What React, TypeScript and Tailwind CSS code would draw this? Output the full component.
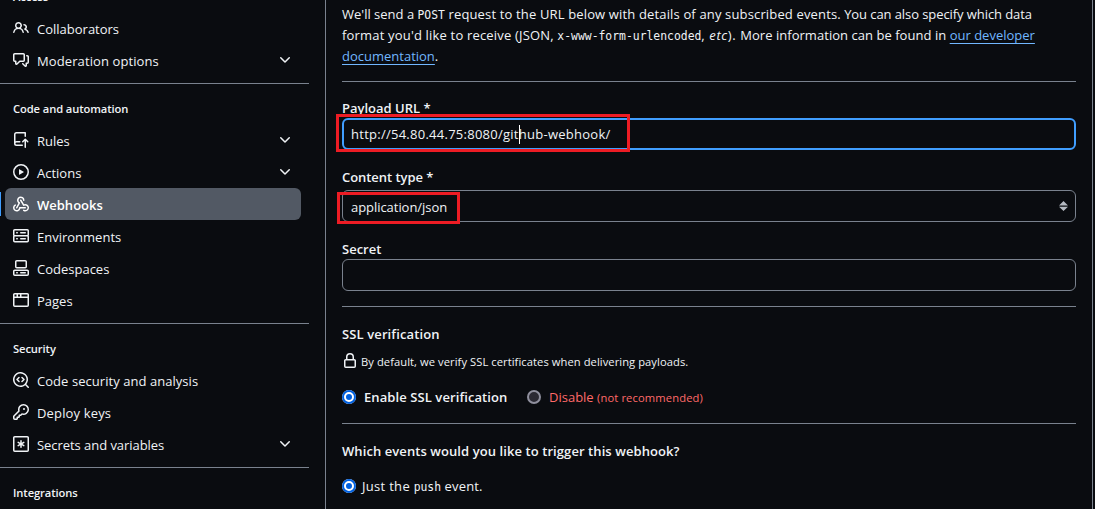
import React from "react";

const icons = {
  people:
    "M2 5.5a3.5 3.5 0 1 1 5.898 2.549 5.508 5.508 0 0 1 3.034 4.084.75.75 0 1 1-1.482.235 4 4 0 0 0-7.9 0 .75.75 0 0 1-1.482-.236A5.507 5.507 0 0 1 3.102 8.05 3.493 3.493 0 0 1 2 5.5ZM11 4a3.001 3.001 0 0 1 2.22 5.018 5.01 5.01 0 0 1 2.56 3.012.749.749 0 0 1-.885.954.752.752 0 0 1-.549-.514 3.507 3.507 0 0 0-2.522-2.372.75.75 0 0 1-.574-.73v-.352a.75.75 0 0 1 .416-.672A1.5 1.5 0 0 0 11 5.5.75.75 0 0 1 11 4Zm-5.5-.5a2 2 0 1 0-.001 3.999A2 2 0 0 0 5.5 3.5Z",
  discussion:
    "M1.75 1h8.5c.966 0 1.75.784 1.75 1.75v5.5A1.75 1.75 0 0 1 10.25 10H7.061l-2.574 2.573A1.458 1.458 0 0 1 2 11.543V10h-.25A1.75 1.75 0 0 1 0 8.25v-5.5C0 1.784.784 1 1.75 1ZM1.5 2.75v5.5c0 .138.112.25.25.25h1a.75.75 0 0 1 .75.75v2.19l2.72-2.72a.749.749 0 0 1 .53-.22h3.5a.25.25 0 0 0 .25-.25v-5.5a.25.25 0 0 0-.25-.25h-8.5a.25.25 0 0 0-.25.25Zm13 2a.25.25 0 0 0-.25-.25h-.5a.75.75 0 0 1 0-1.5h.5c.966 0 1.75.784 1.75 1.75v5.5A1.75 1.75 0 0 1 14.25 12H14v1.543a1.458 1.458 0 0 1-2.487 1.03L9.22 12.28a.749.749 0 0 1 .326-1.275.749.749 0 0 1 .734.215l2.22 2.22v-2.19a.75.75 0 0 1 .75-.75h1a.25.25 0 0 0 .25-.25Z",
  repoPush:
    "M1 2.5A2.5 2.5 0 0 1 3.5 0h8.75a.75.75 0 0 1 .75.75v3.5a.75.75 0 0 1-1.5 0V1.5h-8a1 1 0 0 0-1 1v6.708A2.493 2.493 0 0 1 3.5 9h3.25a.75.75 0 0 1 0 1.5H3.5a1 1 0 0 0 0 2h5.75a.75.75 0 0 1 0 1.5H3.5A2.5 2.5 0 0 1 1 11.5Zm13.23 7.79h-.001l-1.224-1.224v6.184a.75.75 0 0 1-1.5 0V9.066L10.28 10.29a.75.75 0 0 1-1.06-1.061l2.505-2.504a.75.75 0 0 1 1.06 0L15.29 9.23a.751.751 0 0 1-.018 1.042.751.751 0 0 1-1.042.018Z",
  play: "M8 0a8 8 0 1 1 0 16A8 8 0 0 1 8 0ZM1.5 8a6.5 6.5 0 1 0 13 0 6.5 6.5 0 0 0-13 0Zm4.879-2.773 4.264 2.559a.25.25 0 0 1 0 .428l-4.264 2.559A.25.25 0 0 1 6 10.559V5.442a.25.25 0 0 1 .379-.215Z",
  webhook:
    "M5.5 4.25a2.25 2.25 0 0 1 4.5 0 .75.75 0 0 0 1.5 0 3.75 3.75 0 1 0-6.14 2.889l-2.272 4.258a.75.75 0 0 0 1.324.706L7 7.25a.75.75 0 0 0-.309-1.015A2.25 2.25 0 0 1 5.5 4.25ZM7.364 3.607a.75.75 0 0 1 1.03.257l2.608 4.349a3.75 3.75 0 1 1-.628 6.785.75.75 0 0 1 .752-1.299 2.25 2.25 0 1 0-.033-3.88.75.75 0 0 1-1.03-.256L7.107 4.636a.75.75 0 0 1 .257-1.03ZM2.9 8.776A.75.75 0 0 1 2.625 9.8 2.25 2.25 0 1 0 6 11.75a.75.75 0 0 1 .75-.751h5.5a.75.75 0 0 1 0 1.5H7.425a3.751 3.751 0 1 1-5.55-3.998.75.75 0 0 1 1.024.274Z",
  server:
    "M1.75 1h12.5c.966 0 1.75.784 1.75 1.75v4c0 .372-.116.717-.314 1 .198.283.314.628.314 1v4a1.75 1.75 0 0 1-1.75 1.75H1.75A1.75 1.75 0 0 1 0 12.75v-4c0-.358.109-.707.314-1a1.739 1.739 0 0 1-.314-1v-4C0 1.784.784 1 1.75 1ZM1.5 2.75v4c0 .138.112.25.25.25h12.5a.25.25 0 0 0 .25-.25v-4a.25.25 0 0 0-.25-.25H1.75a.25.25 0 0 0-.25.25Zm.25 5.75a.25.25 0 0 0-.25.25v4c0 .138.112.25.25.25h12.5a.25.25 0 0 0 .25-.25v-4a.25.25 0 0 0-.25-.25ZM7 4.75A.75.75 0 0 1 7.75 4h4.5a.75.75 0 0 1 0 1.5h-4.5A.75.75 0 0 1 7 4.75ZM7.75 10h4.5a.75.75 0 0 1 0 1.5h-4.5a.75.75 0 0 1 0-1.5ZM3 4.75A.75.75 0 0 1 3.75 4h.5a.75.75 0 0 1 0 1.5h-.5A.75.75 0 0 1 3 4.75ZM3.75 10h.5a.75.75 0 0 1 0 1.5h-.5a.75.75 0 0 1 0-1.5Z",
  codespaces:
    "M0 11.25c0-.966.784-1.75 1.75-1.75h12.5c.966 0 1.75.784 1.75 1.75v3A1.75 1.75 0 0 1 14.25 16H1.75A1.75 1.75 0 0 1 0 14.25Zm2-9.5C2 .784 2.784 0 3.75 0h8.5C13.216 0 14 .784 14 1.75v5a1.75 1.75 0 0 1-1.75 1.75h-8.5A1.75 1.75 0 0 1 2 6.75Zm1.75-.25a.25.25 0 0 0-.25.25v5c0 .138.112.25.25.25h8.5a.25.25 0 0 0 .25-.25v-5a.25.25 0 0 0-.25-.25Zm-2 9.5a.25.25 0 0 0-.25.25v3c0 .138.112.25.25.25h12.5a.25.25 0 0 0 .25-.25v-3a.25.25 0 0 0-.25-.25ZM7 12.75a.75.75 0 0 1 .75-.75h4.5a.75.75 0 0 1 0 1.5h-4.5a.75.75 0 0 1-.75-.75Zm-4 0a.75.75 0 0 1 .75-.75h.5a.75.75 0 0 1 0 1.5h-.5a.75.75 0 0 1-.75-.75Z",
  browser:
    "M0 2.75C0 1.784.784 1 1.75 1h12.5c.966 0 1.75.784 1.75 1.75v10.5A1.75 1.75 0 0 1 14.25 15H1.75A1.75 1.75 0 0 1 0 13.25ZM14.5 6h-13v7.25c0 .138.112.25.25.25h12.5a.25.25 0 0 0 .25-.25Zm-6-3.5v2h6V2.75a.25.25 0 0 0-.25-.25ZM5 2.5v2h2v-2Zm-3.25 0a.25.25 0 0 0-.25.25V4.5h2v-2Z",
  codescan:
    "M8.47 4.97a.75.75 0 0 0 0 1.06L9.94 7.5 8.47 8.97a.75.75 0 1 0 1.06 1.06l2-2a.75.75 0 0 0 0-1.06l-2-2a.75.75 0 0 0-1.06 0ZM6.53 6.03a.75.75 0 0 0-1.06-1.06l-2 2a.75.75 0 0 0 0 1.06l2 2a.75.75 0 1 0 1.06-1.06L5.06 7.5l1.47-1.47ZM12.246 13.307a7.501 7.501 0 1 1 1.06-1.06l2.474 2.473a.749.749 0 0 1-.326 1.275.749.749 0 0 1-.734-.215ZM1.5 7.5a6.002 6.002 0 0 0 3.608 5.504 6.002 6.002 0 0 0 6.486-1.117.748.748 0 0 1 .292-.293A6 6 0 1 0 1.5 7.5Z",
  key: "M10.5 0a5.499 5.499 0 1 1-1.288 10.848l-.932.932a.749.749 0 0 1-.53.22H7v.75a.749.749 0 0 1-.22.53l-.5.5a.749.749 0 0 1-.53.22H5v.75a.749.749 0 0 1-.22.53l-.5.5a.749.749 0 0 1-.53.22h-2A1.75 1.75 0 0 1 0 14.25v-2c0-.199.079-.389.22-.53l4.932-4.932A5.5 5.5 0 0 1 10.5 0Zm-4 5.5c-.001.431.069.86.205 1.269a.75.75 0 0 1-.181.768L1.5 12.56v1.69c0 .138.112.25.25.25h1.69l.06-.06v-1.19a.75.75 0 0 1 .75-.75h1.19l.06-.06v-1.19a.75.75 0 0 1 .75-.75h1.19l1.023-1.025a.75.75 0 0 1 .768-.18A4 4 0 1 0 6.5 5.5ZM11 6a1 1 0 1 1 0-2 1 1 0 0 1 0 2Z",
  asterisk:
    "M1.75 0h12.5C15.216 0 16 .784 16 1.75v12.5A1.75 1.75 0 0 1 14.25 16H1.75A1.75 1.75 0 0 1 0 14.25V1.75C0 .784.784 0 1.75 0ZM1.5 1.75v12.5c0 .138.112.25.25.25h12.5a.25.25 0 0 0 .25-.25V1.75a.25.25 0 0 0-.25-.25H1.75a.25.25 0 0 0-.25.25ZM8 4a.75.75 0 0 1 .75.75V6.7l1.69-.975a.75.75 0 0 1 .75 1.3L9.5 8l1.69.976a.75.75 0 0 1-.75 1.298L8.75 9.3v1.951a.75.75 0 0 1-1.5 0V9.299l-1.69.976a.75.75 0 0 1-.75-1.3L6.5 8l-1.69-.975a.75.75 0 0 1 .75-1.3l1.69.976V4.75A.75.75 0 0 1 8 4Z",
  lock: "M4 4a4 4 0 0 1 8 0v2h.25c.966 0 1.75.784 1.75 1.75v5.5A1.75 1.75 0 0 1 12.25 15h-8.5A1.75 1.75 0 0 1 2 13.25v-5.5C2 6.784 2.784 6 3.75 6H4Zm8.25 3.5h-8.5a.25.25 0 0 0-.25.25v5.5c0 .138.112.25.25.25h8.5a.25.25 0 0 0 .25-.25v-5.5a.25.25 0 0 0-.25-.25ZM10.5 6V4a2.5 2.5 0 1 0-5 0v2Z",
  chevron:
    "M12.78 5.22a.749.749 0 0 1 0 1.06l-4.25 4.25a.749.749 0 0 1-1.06 0L3.22 6.28a.749.749 0 1 1 1.06-1.06L8 8.939l3.72-3.719a.749.749 0 0 1 1.06 0Z",
};

type IconName = keyof typeof icons;

function Icon({ name }: { name: IconName }) {
  return (
    <svg viewBox="0 0 16 16" className="size-4 shrink-0 fill-current" aria-hidden="true">
      {name === "webhook" ? (
        icons.webhook.split("Z").filter(Boolean).map((d) => <path key={d} d={d + "Z"} />)
      ) : (
        <path d={icons[name]} />
      )}
    </svg>
  );
}

interface Item {
  icon: IconName;
  label: string;
  spacing?: string;
  expandable?: boolean;
  active?: boolean;
}

function NavItem({ icon, label, spacing = "", expandable, active }: Item) {
  return (
    <li className="flex h-8 items-center">
      <span className={`h-6 w-[5px] shrink-0 ${active ? "border-l border-[#409eff]" : ""}`} />
      <a
        className={`flex h-8 w-[296px] items-center rounded-md px-2 ${
          active ? "bg-[#525964] font-semibold text-white" : ""
        }`}
      >
        <Icon name={icon} />
        <span className={`ml-2 flex-1 whitespace-nowrap pt-[3px] ${spacing}`}>{label}</span>
        {expandable && <Icon name="chevron" />}
      </a>
    </li>
  );
}

function NavSection({ title, items, first }: { title: string; items: Item[]; first?: boolean }) {
  return (
    <section className={first ? "" : "mt-[7px] w-[309px] border-t border-[#7a828e] pt-[10px]"}>
      <h3 className="flex h-[30px] items-center pl-[13px] text-[11.2px] font-semibold tracking-[-0.1px]">{title}</h3>
      <ul>
        {items.map((item) => (
          <NavItem key={item.label} {...item} />
        ))}
      </ul>
    </section>
  );
}

function Radio({ checked }: { checked?: boolean }) {
  return checked ? (
    <span className="size-[14px] shrink-0 rounded-full border-[4px] border-white bg-[#0060df] outline-2 -outline-offset-2 outline-[#0060df]" />
  ) : (
    <span className="size-[14px] shrink-0 rounded-full border-2 border-[#8f8f9d] bg-[#2b2a33]" />
  );
}

function Code({ children }: { children: React.ReactNode }) {
  return <code className="font-['DejaVu_Sans_Mono',monospace] text-[11.4px] tracking-normal">{children}</code>;
}

const link = "text-[#71b7ff] underline underline-offset-[3px]";
const label = "flex h-5 items-center pt-0.5 font-semibold";

export default function App() {
  return (
    <div className="flex h-[509px] w-[1095px] overflow-hidden bg-[#0a0c10] font-['Open_Sans',sans-serif] text-[13px] text-[#f0f3f6]">
      <nav className="-mt-[18px] h-[527px] w-[326px] shrink-0 border-r border-[#7a828e]">
        <NavSection
          first
          title="Access"
          items={[
            { icon: "people", label: "Collaborators" },
            { icon: "discussion", label: "Moderation options", spacing: "tracking-[0.1px]", expandable: true },
          ]}
        />
        <NavSection
          title="Code and automation"
          items={[
            { icon: "repoPush", label: "Rules", expandable: true },
            { icon: "play", label: "Actions", expandable: true },
            { icon: "webhook", label: "Webhooks", active: true },
            { icon: "server", label: "Environments" },
            { icon: "codespaces", label: "Codespaces" },
            { icon: "browser", label: "Pages" },
          ]}
        />
        <NavSection
          title="Security"
          items={[
            { icon: "codescan", label: "Code security and analysis", spacing: "tracking-[0.05px]" },
            { icon: "key", label: "Deploy keys", spacing: "tracking-[0.15px]" },
            { icon: "asterisk", label: "Secrets and variables", spacing: "tracking-[-0.05px]", expandable: true },
          ]}
        />
        <NavSection title="Integrations" items={[]} />
      </nav>

      <main className="w-[767px] shrink-0 whitespace-nowrap border-r border-[#7a828e] pl-4 pr-4 pt-1">
        <p className="leading-[21px]">
          <span className="block h-[21px]">
            We'll send a <Code>POST</Code>
            <span className="tracking-[0.15px]">
              {" "}
              request to the URL below with details of any subscribed events.
            </span>
            <span className="tracking-[-0.08px]"> You can also specify which data</span>
          </span>
          <span className="block h-[21px]">
            <span className="tracking-[0.18px]">format you'd like to receive (JSON, </span>
            <Code>x-www-form-urlencoded</Code>
            <span className="tracking-[0.6px]">
              , <em>etc</em>).{" "}
            </span>
            <span className="tracking-[0.04px]">More information can be found in </span>
            <a className={link}>our developer</a>
          </span>
          <span className="block h-[21px]">
            <a className={link}>documentation</a>.
          </span>
        </p>

        <hr className="mt-[14px] border-[#7a828e]" />

        <form>
          <label className={`mt-4 ${label}`}>Payload URL *</label>
          <div className="relative flex h-8 items-center rounded-md border-2 border-[#409eff] px-[7px]">
            <span className="pt-0.5 tracking-[0.26px]">http://54.80.44.75:8080/github-webhook/</span>
            <span className="absolute left-[175px] top-[5px] h-[19px] w-px bg-white" />
            <span className="absolute -left-2 -top-[6px] h-[38px] w-[294px] border-[3px] border-[#ed1c24]" />
          </div>

          <label className={`mt-[17px] tracking-[-0.05px] ${label}`}>Content type *</label>
          <div className="relative mt-[3px] flex h-8 items-center justify-between rounded-md border border-[#7a828e] pl-2 pr-[7px]">
            <span className="pt-1 tracking-[-0.05px]">application/json</span>
            <svg viewBox="0 0 9 10" className="h-[10px] w-[9px] fill-[#b5bac2]">
              <path d="M4.5 0 9 4.4H0ZM0 5.8h9L4.5 10Z" />
            </svg>
            <span className="absolute -left-[6px] top-px h-8 w-[123px] border-[3px] border-[#ed1c24]" />
          </div>

          <label className={`mt-[17px] ${label}`}>Secret</label>
          <div className="h-8 rounded-md border border-[#7a828e]" />

          <hr className="mt-[15px] border-[#7a828e]" />

          <h4 className={`mt-[17px] tracking-[0.12px] ${label}`}>SSL verification</h4>
          <p className="mt-[7px] flex h-5 items-center text-[11.2px]">
            <Icon name="lock" />
            <span className="ml-[3px] pt-0.5 tracking-[0.06px]">
              By default, we verify SSL certificates when delivering payloads.
            </span>
          </p>
          <div className="mt-4 flex h-5 items-center">
            <Radio checked />
            <span className="ml-2 w-[163px] pt-0.5 font-semibold tracking-[0.09px]">Enable SSL verification</span>
            <Radio />
            <span className="ml-2 pt-0.5 text-[#ff6a69]">
              Disable <small className="text-[11.2px] tracking-[0.12px]">(not recommended)</small>
            </span>
          </div>

          <hr className="mt-4 border-[#7a828e]" />

          <h4 className={`mt-[17px] tracking-[0.08px] ${label}`}>Which events would you like to trigger this webhook?</h4>
          <div className="mt-[15px] flex h-5 items-center">
            <Radio checked />
            <span className="ml-[6px] pt-0.5">
              <span className="tracking-[0.3px]">Just the </span>
              <Code>push</Code>
              <span className="tracking-[0.15px]"> event.</span>
            </span>
          </div>
        </form>
      </main>
    </div>
  );
}
